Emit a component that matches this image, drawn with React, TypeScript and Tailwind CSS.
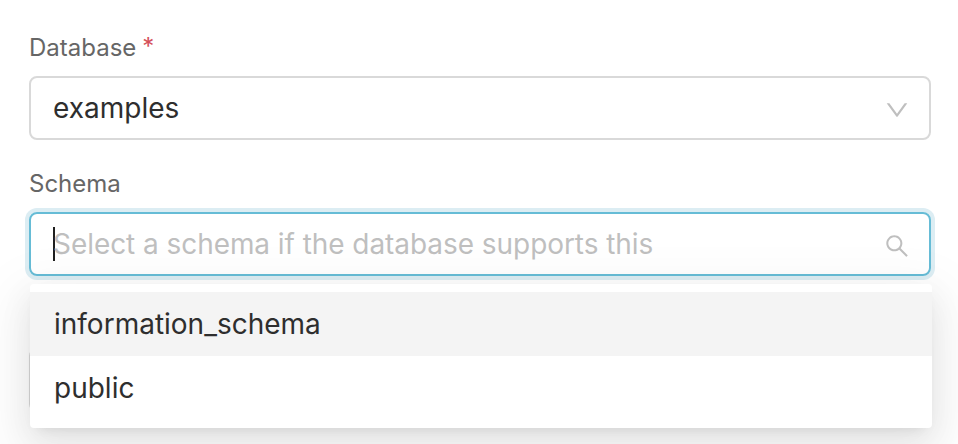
import * as React from 'react'

const OPTIONS = ['information_schema', 'public']

function ChevronIcon() {
  return (
    <svg className="mt-1 h-6 w-6 text-[#bfbfbf]" viewBox="64 64 896 896" fill="currentColor">
      <path d="M884 256h-75c-5.100 0-9.900 2.500-12.900 6.600L512 654.200 227.900 262.600c-3-4.100-7.800-6.600-12.900-6.600h-75c-6.500 0-10.300 7.400-6.500 12.700l352.600 486.100c12.800 17.600 39 17.600 51.700 0l352.600-486.100c3.900-5.300.1-12.700-6.400-12.700z" />
    </svg>
  )
}

function SearchIcon() {
  return (
    <svg className="mt-1 h-6 w-6 text-[#bfbfbf]" viewBox="64 64 896 896" fill="currentColor">
      <path d="M909.600 854.500L649.900 594.800C690.200 542.700 712 479 712 412c0-80.200-31.300-155.400-87.900-212.100-56.600-56.700-132-87.900-212.100-87.900s-155.500 31.300-212.100 87.900C143.200 256.500 112 331.800 112 412c0 80.100 31.300 155.500 87.900 212.100C256.500 680.800 331.800 712 412 712c67 0 130.600-21.800 182.700-62l259.700 259.600a8.200 8.200 0 0 0 11.600 0l43.600-43.500a8.200 8.200 0 0 0 0-11.600zM570.400 570.400C528 612.700 471.800 636 412 636s-116-23.300-158.400-65.600C211.300 528 188 471.800 188 412s23.300-116.100 65.600-158.400C296 211.300 352.200 188 412 188s116.100 23.200 158.400 65.600S636 352.200 636 412s-23.300 116.100-65.600 158.400z" />
    </svg>
  )
}

export default function App() {
  const [search, setSearch] = React.useState('')

  return (
    <div className="h-[444px] w-[958px] overflow-hidden bg-white pl-[29px] pr-[27px] pt-8 font-['Inter',sans-serif] text-[28px] text-[#2e2e2e]">
      <div className="flex h-8 items-center gap-1.5 text-2xl text-[#666666]">
        Database <span className="pb-0.5 text-[#d4505a]">*</span>
      </div>
      <div className="mt-3 flex h-16 items-center justify-between rounded-lg border-2 border-[#d9d9d9] pl-[22px] pr-5">
        <span>examples</span>
        <ChevronIcon />
      </div>
      <div className="mt-7 flex h-8 items-center text-2xl text-[#666666]">Schema</div>
      <div className="relative mt-3">
        <div className="flex h-16 items-center rounded-lg border-2 border-[#66bcd6] pl-[22px] pr-5 shadow-[0_0_0_4px_#dcedf3]">
          <span className="h-[34px] w-0.5 bg-[#1f1f1f]" />
          <input
            value={search}
            onChange={(e) => setSearch(e.target.value)}
            placeholder="Select a schema if the database supports this"
            className="-ml-0.5 min-w-0 flex-1 tracking-[-0.06px] outline-none placeholder:text-[#bfbfbf]"
          />
          <SearchIcon />
        </div>
        {/* next field, mostly covered by the open menu */}
        <div className="mt-[72px] h-16 rounded-lg border-2 border-[#d9d9d9]" />
        <div className="absolute left-px top-[72px] h-36 w-[902px] rounded bg-white py-2 shadow-[0_6px_12px_-8px_rgba(0,0,0,0.12),0_12px_32px_rgba(0,0,0,0.08),0_18px_56px_16px_rgba(0,0,0,0.05)]">
          {OPTIONS.map((option, i) => (
            <div key={option} className={i === 0 ? 'flex h-16 items-center bg-[#f4f4f4] px-6' : 'flex h-16 items-center px-6'}>
              {option}
            </div>
          ))}
        </div>
      </div>
    </div>
  )
}
